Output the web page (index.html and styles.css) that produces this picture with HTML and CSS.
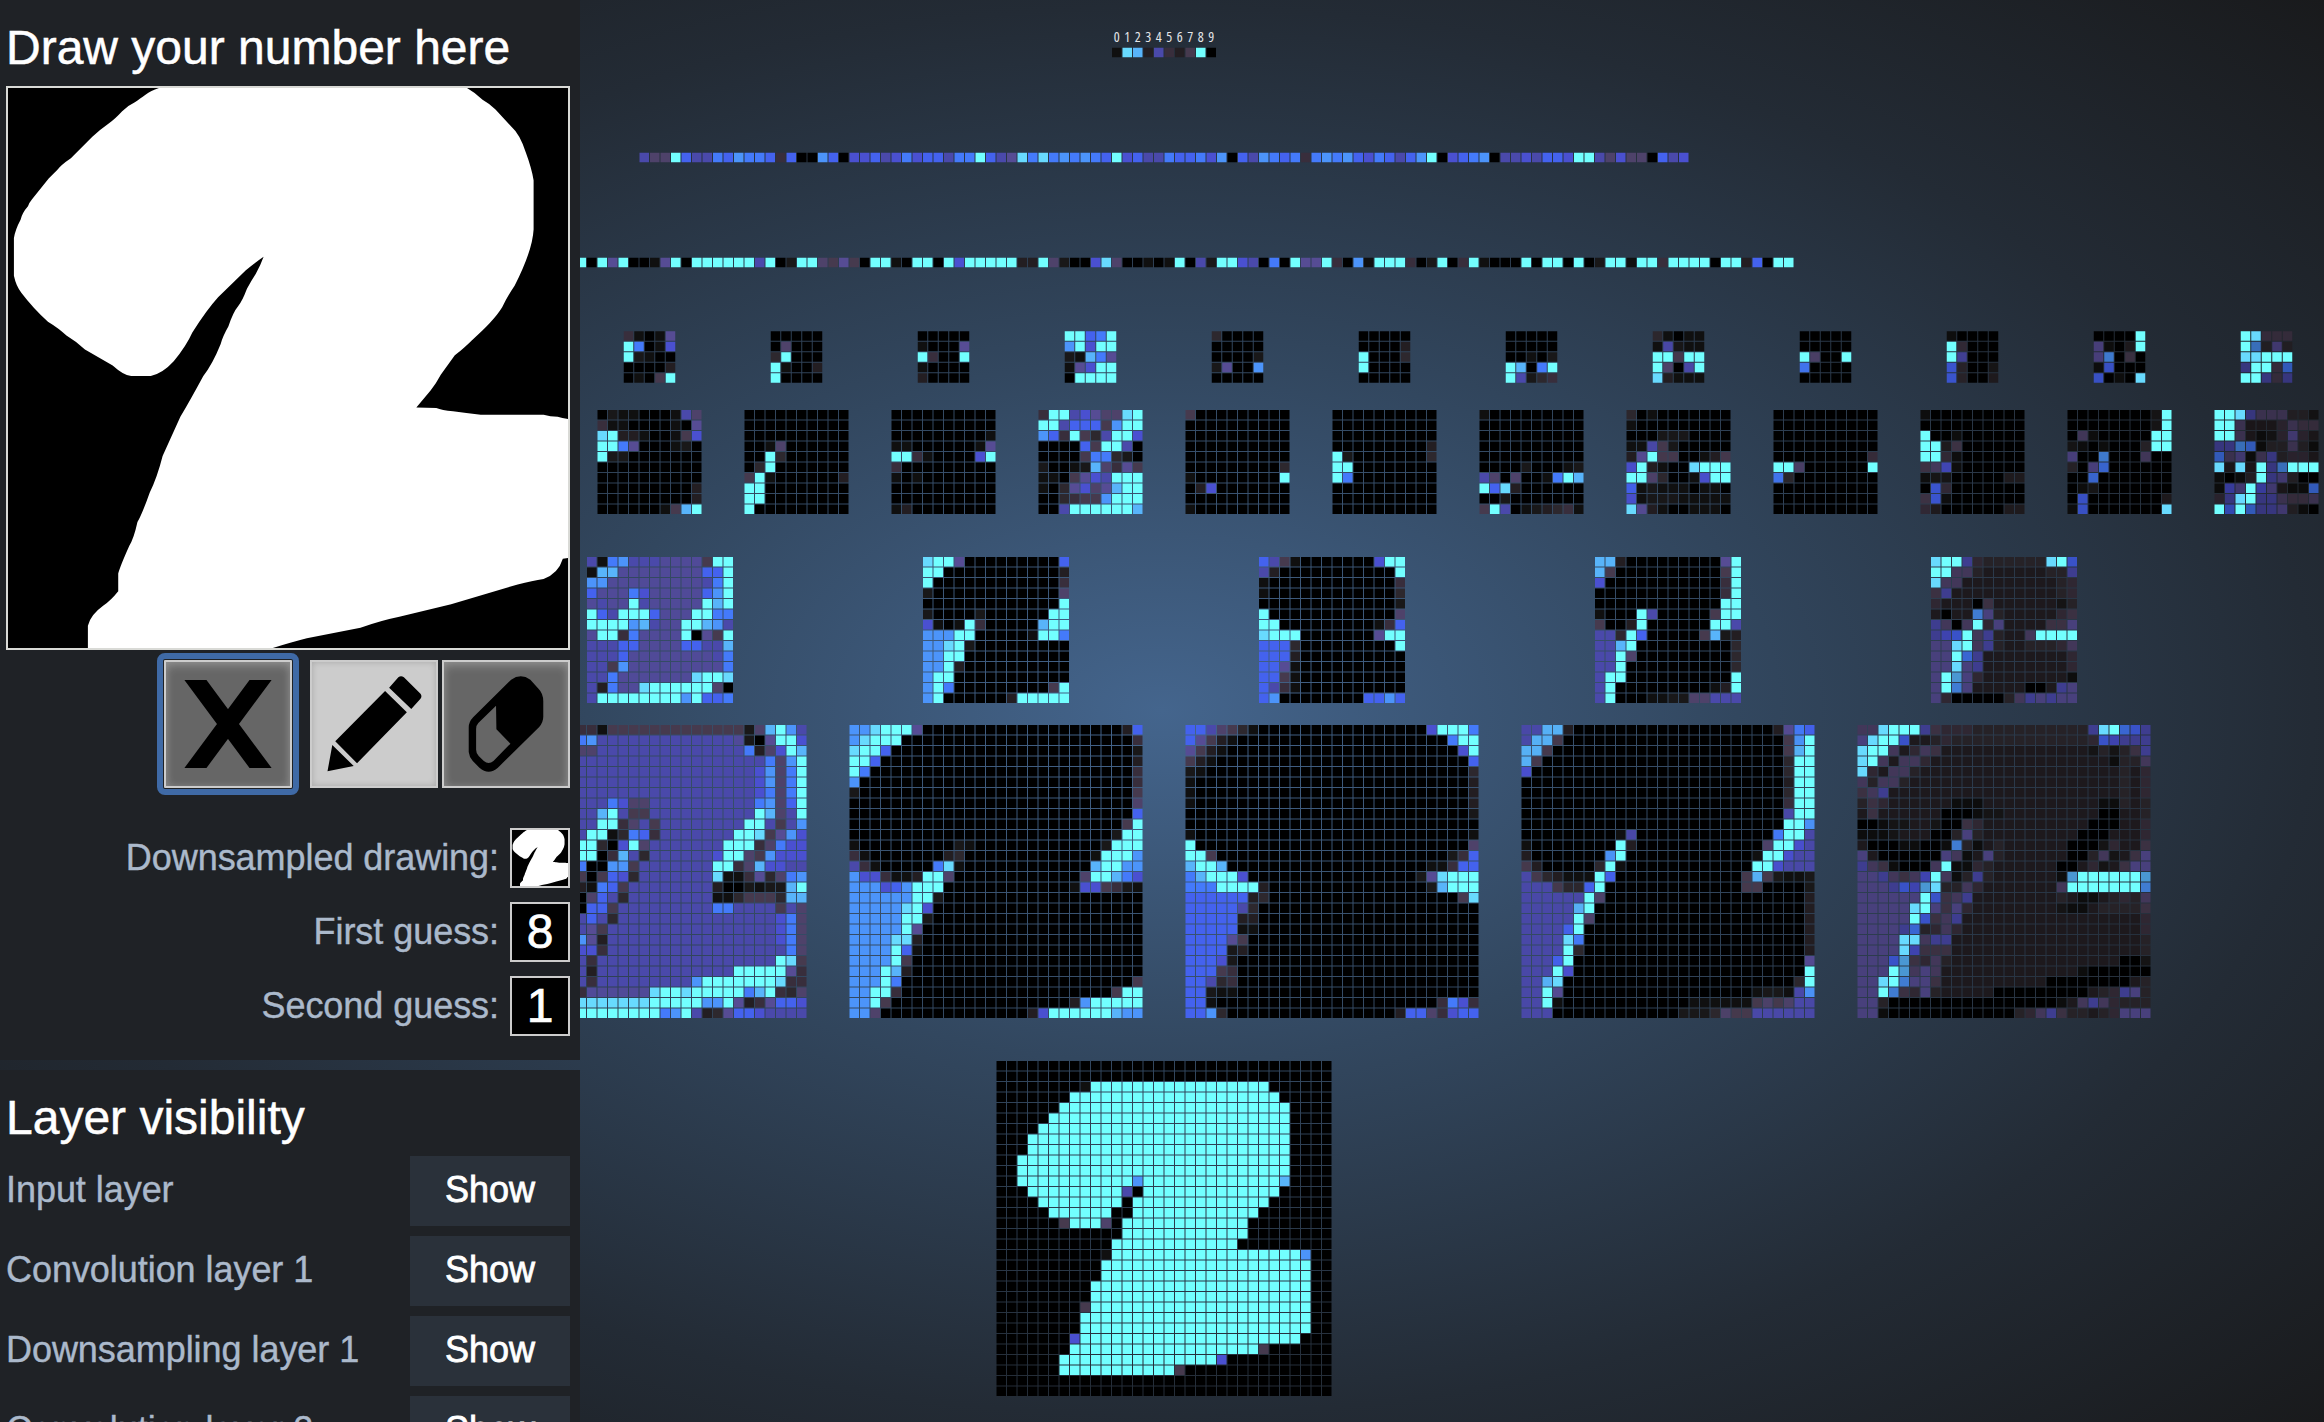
FILE: index.html
```html
<!DOCTYPE html>
<html lang="en">
<head>
<meta charset="utf-8">
<title>Convolutional network visualization</title>
<link rel="stylesheet" href="styles.css">
</head>
<body>
<main class="scene">
  <div class="digits"><span>0</span><span>1</span><span>2</span><span>3</span><span>4</span><span>5</span><span>6</span><span>7</span><span>8</span><span>9</span></div>
  <svg class="layer layer-output" data-layer="output"></svg>
  <svg class="layer layer-fc2" data-layer="fc2"></svg>
  <svg class="layer layer-fc1" data-layer="fc1"></svg>
  <svg class="layer layer-down2" data-layer="down2"></svg>
  <svg class="layer layer-conv2" data-layer="conv2"></svg>
  <svg class="layer layer-down1" data-layer="down1"></svg>
  <svg class="layer layer-conv1" data-layer="conv1"></svg>
  <svg class="layer layer-input" data-layer="input"></svg>
</main>

<aside class="sidebar">
  <section class="panel panel-draw">
    <h2 class="title">Draw your number here</h2>
    <div class="board">
      <svg class="fill" viewBox="22 209 1514 1330" preserveAspectRatio="none">
        <path id="stroke2" fill="#fff" d="M430 209C400 217 385 232 365 243Q345 251 330 265Q310 284 296 292Q270 308 250 325L192 376Q165 392 155 404L132 424L87 473Q80 480 76 490Q60 506 56 522Q42 545 38 565V655Q44 680 58 695Q90 732 130 764Q160 780 180 797Q208 812 230 830L305 868Q335 892 355 893H408Q440 887 470 858Q505 820 520 790Q560 735 590 706L665 642Q690 624 713 610Q705 630 692 650Q680 666 668 686Q655 716 645 726Q630 742 618 775Q602 800 597 817Q575 865 550 893Q515 950 488 990L440 1083Q425 1135 405 1170Q385 1220 372 1240Q362 1280 350 1296Q325 1345 320 1362V1404Q300 1426 280 1438Q245 1460 238 1486V1539H738Q790 1525 830 1516L975 1491Q1030 1474 1080 1465L1220 1435L1400 1388Q1440 1379 1470 1375Q1510 1362 1522 1327L1536 1325V995Q1520 994 1508 990Q1488 990 1470 985H1300Q1260 981 1225 977Q1195 974 1180 969L1126 968L1165 927Q1180 910 1192 890L1230 844Q1258 824 1275 809Q1335 763 1358 730Q1372 704 1392 678Q1440 595 1443 545V428Q1438 400 1422 362Q1405 318 1385 303L1340 260Q1325 247 1305 237Q1285 220 1263 209Z"/>
      </svg>
    </div>
    <div class="tools">
      <button class="tool tool-clear" aria-label="Clear">
        <svg class="fill" viewBox="448 66 337 372" preserveAspectRatio="none"><path d="M498 120H558L735 384H675ZM675 120H735L558 384H498Z"/></svg>
      </button>
      <button class="tool tool-on" aria-label="Pencil">
        <svg class="fill" viewBox="843 66 336 372" preserveAspectRatio="none"><path d="M1052 143L1077 112Q1084 105 1092 112L1137 161Q1142 169 1137 176L1112 207ZM1041 153L1100 217L965 370L906 304ZM898 315L956 378L885 394Z"/></svg>
      </button>
      <button class="tool" aria-label="Eraser">
        <svg class="fill" viewBox="1200 66 336 372" preserveAspectRatio="none">
          <path d="M1382 119Q1408 99 1434 119L1456 146Q1469 160 1469 184V230Q1469 246 1458 261L1346 383Q1321 407 1296 383L1278 363Q1268 350 1267 336V262Q1267 246 1279 232Z"/>
          <path class="cut" d="M1341 197L1293 249Q1287 256 1287 267V329Q1287 340 1294 348L1308 363Q1321 375 1334 363L1380 311L1342 268Z"/>
        </svg>
      </button>
    </div>
    <div class="result"><span class="label">Downsampled drawing:</span>
      <div class="box"><svg class="fill" viewBox="22 209 1514 1330" preserveAspectRatio="none"><use href="#stroke2"/></svg></div></div>
    <div class="result"><span class="label">First guess:</span><div class="box">8</div></div>
    <div class="result"><span class="label">Second guess:</span><div class="box">1</div></div>
  </section>

  <section class="panel panel-layers">
    <h2 class="title">Layer visibility</h2>
    <div class="row"><span class="label">Input layer</span><button class="toggle">Show</button></div>
    <div class="row"><span class="label">Convolution layer 1</span><button class="toggle">Show</button></div>
    <div class="row"><span class="label">Downsampling layer 1</span><button class="toggle">Show</button></div>
    <div class="row"><span class="label">Convolution layer 2</span><button class="toggle">Show</button></div>
  </section>
</aside>
<script src="layers.js"></script>
</body>
</html>
```
FILE: styles.css
```css
* { box-sizing: border-box; }

body {
  margin: 0;
  height: 1422px;
  display: grid;
  grid-template: 1422px / 2324px;
  overflow: hidden;
  background: #191a1b;
  font-family: "Liberation Sans", Arial, sans-serif;
}

.scene,
.sidebar { grid-area: 1 / 1; }

/* network */
.scene {
  display: flex;
  flex-direction: column;
  padding-top: 27px;
  overflow: hidden;
  background: radial-gradient(ellipse farthest-corner at center, #44658d 0%, #32475f 35%, #232b35 70%, #191a1c 100%);
}

.digits {
  display: grid;
  grid-template-columns: repeat(10, 10.5px);
  height: 20px;
  margin-left: 1111.5px;
  color: #e4e6e8;
  font: 14px/20px "Open Sans", "Noto Sans", sans-serif;
  font-stretch: 75%;
  text-align: center;
}

.layer {
  display: block;
  flex: none;
  width: 2324px;
}

.layer-output { height: 11px; }
.layer-fc2 { height: 11px; margin-top: 94px; }
.layer-fc1 { height: 11px; margin-top: 94px; }
.layer-down2 { height: 53px; margin-top: 63px; }
.layer-conv2 { height: 105px; margin-top: 26px; }
.layer-down1 { height: 147px; margin-top: 42px; }
.layer-conv1 { height: 294px; margin-top: 21px; }
.layer-input { height: 336px; margin-top: 42px; }

/* sidebar */
.sidebar {
  width: 580px;
  height: 1422px;
  display: flex;
  flex-direction: column;
  gap: 10px;
  overflow: hidden;
}

.panel {
  flex: none;
  padding: 20px 10px 0 6px;
  background: #1f2226;
}

.panel-draw { height: 1060px; }
.panel-layers { height: 400px; }

.title {
  margin: 0 0 10px;
  color: #fff;
  font-size: 48px;
  font-weight: 400;
  line-height: 56px;
  -webkit-text-stroke: 0.5px #fff;
}

.board {
  width: 564px;
  height: 564px;
  border: 2px solid #d9dad6;
  background: #000;
}

.fill {
  display: block;
  width: 100%;
  height: 100%;
}

.tools {
  display: flex;
  justify-content: flex-end;
  gap: 4px;
  margin: 10px 0 40px;
}

.tool {
  width: 128px;
  height: 128px;
  padding: 0;
  border: 2px solid #ccc;
  background: #666;
  box-shadow: inset 0 4px 10px rgba(255, 255, 255, 0.22), inset 0 0 8px rgba(255, 255, 255, 0.12);
}

.tool-on {
  background: #ccc;
  box-shadow: inset 0 0 6px rgba(0, 0, 0, 0.18);
}

.tool-clear {
  margin-right: 14px;
  outline: 6px solid #3f6aa6;
  outline-offset: 1px;
  border-radius: 1px;
}

.cut { fill: #666; }

.result {
  display: flex;
  justify-content: flex-end;
  align-items: center;
  gap: 11px;
  margin-bottom: 14px;
}

.label {
  color: #abb9cb;
  font-size: 36px;
  line-height: 42px;
  letter-spacing: -0.05px;
  -webkit-text-stroke: 0.4px #abb9cb;
}

.box {
  width: 60px;
  height: 60px;
  border: 2px solid #ccc;
  background: #000;
  color: #fff;
  font-size: 48px;
  line-height: 56px;
  text-align: center;
  -webkit-text-stroke: 0.7px #fff;
}

.row {
  display: flex;
  justify-content: space-between;
  align-items: center;
  margin-bottom: 10px;
}

.row .label { padding-bottom: 3px; }

.toggle {
  width: 160px;
  height: 70px;
  padding: 0 0 3px;
  border: 0;
  background: #2a313a;
  color: #fff;
  font: 36px/42px "Liberation Sans", Arial, sans-serif;
  -webkit-text-stroke: 0.8px #fff;
}
```
FILE: layers.js
```js
// Activations are one character per cell, from 0 (off) to g (saturated).
// x{n} repeats a cell n times; short rows are filled up with 0.
const RAMP = {
  0: [0, 0, 0], 1: [16, 16, 16], 2: [25, 24, 25], 3: [35, 30, 34], 4: [45, 40, 46],
  5: [56, 46, 60], 6: [70, 58, 78], 7: [78, 66, 106], 8: [86, 76, 148], h: [80, 74, 152],
  9: [74, 73, 170], a: [74, 80, 208], b: [68, 98, 238], c: [68, 122, 250],
  d: [76, 148, 250], e: [88, 180, 250], f: [104, 218, 254], g: [114, 255, 255]
};
const PITCH = 10.5;
const CELL = 9.5;
const CENTER = 1164.5;

const LAYERS = {
  output: { cols: 10, y: 0.75, maps: [[0, 1, '1fe39536g0']] },
  fc2: { cols: 100, y: 0.75, maps: [[0, 1,
    '977gb99cbd' + 'ccb5b00db0' + 'aab9acabb9' + 'ccgb98fcfc' + 'dcdcbgab99' +
    'cbbcad0b9d' + 'cbc5cdcdba' + 'cb9bdg0abc' + 'd099a9bbag' + 'g97a770b9a']] },
  fc1: { cols: 120, y: 0.75, maps: [[0, 1,
    '0000g0g8g0' + '018g0ggggg' + 'g9g02gg768' + '60gg10gg0g' + 'aggggg33g7' + '200af70010' +
    '1g092gga90' + 'c0g88g50d1' + 'ggg502g05g' + '1000g0gg0g' + '02gg1gg5gg' + 'gg0gg3b0gg']] },
  down2: { cols: 5, y: 0.25, step: 147, maps: [
    [-3.5, 1, '51018/gc01a/g21/00003/0106g'],
    [-2.5, 1, '0/07/4g/g1003/g'],
    [-1.5, 1, '0/10008/g500g/1/3'],
    [-0.5, 1, 'ggbcg/dgagg/21ec8/18agg/0gggg'],
    [0.5, 1, '4/0/00002/2800d/0'],
    [1.5, 1, '0/00003/g0004/g/0'],
    [2.5, 1, '0/0/00102/ge0cg/g9245'],
    [3.5, 0.97, '41011/19211/gg6gg/g709g/f3111'],
    [4.5, 0.94, '0/0/g700g/c/0'],
    [5.5, 0.86, '1/g5/g9/b4002/b4003'],
    [6.5, 0.82, '0000g/8103g/8d060/1b/b010f'],
    [7.5, 0.74, 'gf666/gd484/ffggg/9gg6c/gg969']] },
  conv2: { cols: 10, y: 0, step: 147, maps: [
    [-3.5, 1, '0211000197/5110000108/fg3310016a/ggc8000120/g22/0/0/0{9}3/0{9}3/00000016eg'],
    [-2.5, 1, '0/0/0/0017/00g4/04g/6g10000003/gg/gg/g'],
    [-1.5, 1, '0/0/0{9}1/1100000018/gg510000ag/5/101/0/0/13'],
    [-0.5, 1, '5gg9a877fg/gg9bbb6dgg/db5g649gga/0000b6gg90/00006cc420/20012e7586/11068a9ggg/1048a78egg/004566dggg/009gggggge'],
    [0.5, 1, '6/0/0/0/0/0{9}4/10{8}g/03a/0/1'],
    [1.5, 1, '0/0/0/0{9}3/g20{7}4/gg/gc/0/0/0'],
    [2.5, 1, '1/0/0/0/0/0000200012/9707001cge/gbf3/002/6g90123451'],
    [3.5, 0.97, '401/1/000222/11962/38g6600136/ag3100fggg/gg74001agg/b121110110/a122211111/f831001110'],
    [4.5, 0.94, '0/0/0/0/0{9}5/gg70{6}g/c4/0/0/0'],
    [5.5, 0.86, '1/0/g001/gg36/gg51/67a1/1220000033/0b5/6b1/5300000033'],
    [6.5, 0.82, '0{8}2g/0{8}2g/07100000gg/21010004gg/800d000700/408c/00c/012/0b0{7}3/1b0{7}f'],
    [7.5, 0.74, 'ggf9777442/gg73335766/gg73125853/99dc144741/c781794553/f3f3g9dggg/1014g98400/1a8ga8311c/59fg997667/gbgc998410']] },
  down1: { cols: 14, y: 0, step: 336, maps: [
    [-1.5, 1, '91cd999hhhh6gg/1eeh{8}bbg/ddh{9}9cg/bhhhcahhhhhbdg/h9hhg9hhhhhgeg/gb9gggbhhhggcc/ggggde9hhgged9/hgg5chhhhg086g/999bbhhhhbb99e/999bh{8}9c/996dh{9}c/99ch{7}fggf/93chhfgggggg7/9ggggggggdgbbc'],
    [-0.5, 1, 'fgg80{9}b/gg0{11}3/g0{12}5/20{12}7/0{13}g/2000020{6}gg/a101g50{5}egg/dddgg0{5}1ggc/ddfg2/ddgg/ddg3/dgg/dgc0{9}6g/dg0{6}3ggggg'],
    [0.5, 1, 'b9610{7}agg/930{11}g/10{12}5/10{12}4/0{13}2/g0{12}7/gg0{9}15b/fggg0{7}8gg/bbb40{9}g/bbb3/bb81/bb61/b951/bd0{8}bbdb'],
    [1.5, 1, 'ee30{9}8g/e60{10}6g/a0{11}5g/0{12}5g/0{12}gg/1000g90{5}6gg/6003g0{6}gg9/994gb0{5}6e23/99eg0{9}4/99g70{9}4/99g0{10}4/9gg0{10}g/9g0{9}13g/9g000112277999'],
    [2.5, 0.84, 'fgg954{6}fgb/gg7743{6}449/f773{9}45/693{10}45/5333063{6}24/3033d843{5}56/9707g5833336' + '68/9abg794337gggg/88fg7943344457/88gc93{8}5/88f893{8}5/8ge853{8}1/8gd83{5}00398/850{5}4798988']] },
  conv1: { cols: 28, y: 0, step: 336, maps: [
    [-1.5, 1, [
      '9{6}5516{13}27egd9', '9{6}cd9{13}h208gga', '9{6}779{14}c37age', '9{24}c7dg', '9{23}ad7cg', '9{23}ad7cg',
      '9{23}ac7cg', '9{9}ca779{10}cd7bg', '9{8}eg9669{10}ge79g', '9{8}gg57969{8}gg969d', '9{7}gg14cb59{7}ggf68da',
      '9{6}gg40ag79{7}ggg57caa', '9{6}gg05e949{6}agg76daaa', '9{6}c00dd69{7}gg57eaa99', '9{6}606ba49{7}f115847cd',
      '9{6}31cb69{8}3002122eg', '9{6}07b949{8}1146664ee', '9{6}0bb69{9}cc9999697', '9{7}b949{15}ac7', '9{7}869{16}ac7',
      '9{6}d839{16}ac7', '9{6}aa59{16}9c7', '9{7}59{17}gf6', '9{7}39{13}ggggg85', '9{7}59{9}dgggggggf55',
      '9{6}5h{6}fggfgggggceg547', 'f{13}gggggddg8358bba', 'g{14}cdg9348bba9999'].join('/')],
    [-0.5, 1, 'ddfggg80{19}3b/dfggg0{22}5/fggb0{23}2/ggb0{24}3/gc0{25}5/d0{26}5/20{26}6/0{27}7/0{27}b/0{26}6g/0{25}2gg/10{9}210{12}2ggg/510{7}340{12}1gggd/9510{5}cf10{12}eggdd/daa5113gg70{12}7ggeca/dddabdggg0{12}1aa6521/d{6}gg2/d{5}fga/d{5}gg2/d{5}g8/d{4}ff3/d{4}gb1/d{4}g6/d{3}ge3/d{3}gc0{22}6/ddgg50{20}6gg/ddg60{17}3dggggg/dd70{14}3aggggggedd'],
    [0.5, 1, 'bb976410{16}agggc/b86310{20}cgg/86310{22}ag/6310{24}b/210{25}4/10{26}3/10{26}3/10{26}3/0{27}2/0/10{26}1/g0{26}7/gg60{22}25b/egge0{19}115bb/ceggga0{16}28fggg/cccgggg30{15}2eggg/b{6}340{18}6f/b{5}94/b{5}33/b{5}11/b{4}86/b{4}23/bbba2/bbb65/bb945/bb211/bb10{21}5ca5/bbd40{16}3bb75abb'],
    [1.5, 0.98, '99ee30{19}38cb/9ee60{21}6dg/ee60{22}6eg/e60{23}4gg/a0{24}4gg/0{25}3gg/0{25}4gg/0{25}5gg/0{25}9gg/0{25}ggd/0{9}190{13}cgg9/10{8}g30{12}7gga9/30{7}dg0{12}1gga99/630{5}4g10{12}gga999/9643111gb0{12}6e62112/999644bg0{13}660{4}2/9{6}g70{19}3/9{5}eg0{20}3/9{5}g70{20}3/9{4}bg0{21}3/9{4}fc0{21}3/9{4}g40{21}3/999bg0{22}8/999ga0{22}g/99ef0{22}4g/99g80{18}12219d/99g10{12}1{6}676799/9990{12}22247669{6}'],
    [2.5, 0.84, [
      '77fggg965554{11}9fgcb9', '8fggb33454{13}5ba999', 'fgg735763{14}242469', 'fg737753{17}1447', 'f537743{19}435',
      '747743{20}435', '6793{22}435', '4653{6}1113{11}11434', '363{6}0001223{9}00334', '0012233200653{10}000335',
      '1112333004843{9}0003335', '300011001d41343{6}00025336', '830{6}8713843{6}00472368', '97610007g11543{6}003523688',
      '889767ag714943{6}1eg{6}e', '8889baef44753{7}7g{7}d', '8{6}gb6793{8}431134547', '8{5}fg86853{8}211344446',
      '8{5}gb6793{17}5', '8{4}9c45753{17}5', '8{4}ff7993{18}4', '8{4}fa6663{18}4', '888be65743{16}002',
      '888ge7873{13}10{6}', '88fgd8863{10}0{8}34', '88gd65843{5}0{9}345984', '8840{16}137975444', '8810{12}4579644345888'].join('/')]] },
  input: { cols: 32, y: 0, maps: [[0, 1,
    '0/0/0{8}1g{17}/0{7}g{20}/0{6}g{22}/0{5}g{23}/0{4}g{24}/000g{25}/000g{25}/00g{26}/00g{26}/00g{11}dg{13}e/000g{9}90g{13}/0000g{8}0g{13}/0{5}g{6}00g{12}/0{6}6ggg70g{12}/0{12}g{12}/0{11}g{12}/0{10}1g{18}d/0{10}g{20}/0{10}g{20}/0{9}g{21}/0{9}g{21}/0{8}6g{21}/0{8}g{22}/0{8}g{22}/0{7}ag{21}/0{7}g{18}6/0{6}g{15}a/0{6}g{11}6/0/0']] }
};

function expand(row, cols) {
  return row.replace(/(.)\{(\d+)\}/g, (m, c, n) => c.repeat(+n)).padEnd(cols, '0').slice(0, cols);
}

function color(key, dim) {
  const k = 'fg'.includes(key) ? 1 : dim;
  return 'rgb(' + RAMP[key].map(v => Math.round(v * k)).join(',') + ')';
}

document.querySelectorAll('.layer').forEach(svg => {
  const layer = LAYERS[svg.dataset.layer];
  layer.maps.forEach(([slot, dim, text]) => {
    const left = CENTER + slot * (layer.step || 0) - layer.cols * PITCH / 2;
    const paths = {};
    text.split('/').forEach((row, r) => {
      [...expand(row, layer.cols)].forEach((key, c) => {
        paths[key] = (paths[key] || '') +
          `M${left + c * PITCH} ${layer.y + r * PITCH}h${CELL}v${CELL}h-${CELL}z`;
      });
    });
    for (const key in paths) {
      const p = document.createElementNS('http://www.w3.org/2000/svg', 'path');
      p.setAttribute('d', paths[key]);
      p.setAttribute('fill', color(key, dim));
      svg.append(p);
    }
  });
});
```
